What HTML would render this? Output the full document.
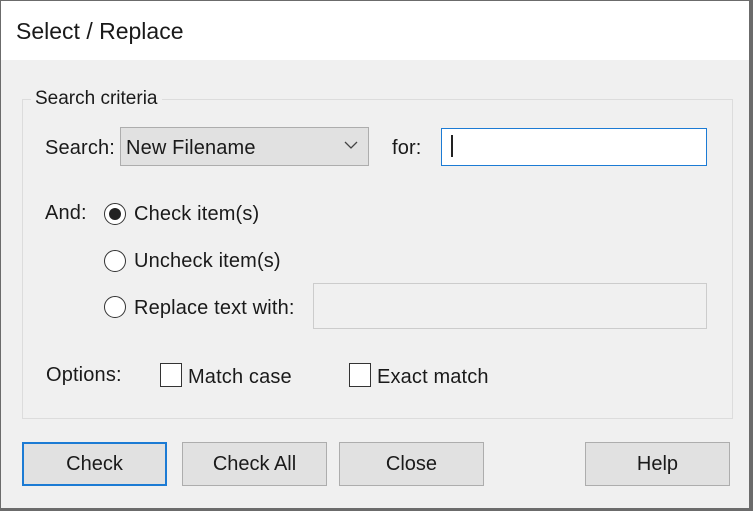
<!DOCTYPE html>
<html><head><style>
body{margin:0;width:753px;height:511px;overflow:hidden;background:#6b6b6b;font-family:"Liberation Sans",sans-serif;color:#1a1a1a;}
#win{position:absolute;left:1px;top:1px;width:748px;height:507px;background:#f0f0f0;}
#title{position:absolute;left:0;top:0;width:748px;height:59px;background:#fff;}
.a{position:absolute;white-space:nowrap;font-size:20px;letter-spacing:0.15px;}
.grp{position:absolute;left:21px;top:98px;width:709px;height:318px;border:1px solid #dcdcdc;}
.btn{position:absolute;top:441px;height:42px;border:1px solid #adadad;background:#e1e1e1;text-align:center;line-height:42px;font-size:20px;}
.radio{position:absolute;width:22px;height:22px;border:1.5px solid #333;border-radius:50%;background:#fff;box-sizing:border-box;}
.cb{position:absolute;width:22px;height:24px;border:1.5px solid #333;background:#fff;box-sizing:border-box;}
</style></head><body>
<div id="win">
<div id="title"><div class="a" style="left:15px;top:17px;font-size:23px;letter-spacing:0;">Select / Replace</div></div>
<div class="grp"></div>
<div class="a" style="left:30px;top:87px;background:#f0f0f0;padding:0 4px;font-size:19px;letter-spacing:0;">Search criteria</div>
<div class="a" style="left:44px;top:136px;">Search:</div>
<div style="position:absolute;left:119px;top:126px;width:247px;height:37px;border:1px solid #adadad;background:#e1e1e1;"></div>
<div class="a" style="left:125px;top:136px;">New Filename</div>
<svg style="position:absolute;left:343px;top:140px" width="14" height="9"><path d="M1 1 L7 7 L13 1" fill="none" stroke="#444" stroke-width="1.3"/></svg>
<div class="a" style="left:391px;top:136px;">for:</div>
<div style="position:absolute;left:440px;top:127px;width:266px;height:38px;border:1px solid #1c7bd4;box-sizing:border-box;background:#fff;"></div>
<div style="position:absolute;left:450px;top:134px;width:1.5px;height:22px;background:#222;"></div>
<div class="a" style="left:44px;top:201px;">And:</div>
<div class="radio" style="left:103px;top:202px;"><div style="position:absolute;left:3.5px;top:3.5px;width:12px;height:12px;border-radius:50%;background:#222;"></div></div>
<div class="a" style="left:133px;top:202px;">Check item(s)</div>
<div class="radio" style="left:103px;top:249px;"></div>
<div class="a" style="left:133px;top:249px;">Uncheck item(s)</div>
<div class="radio" style="left:103px;top:295px;"></div>
<div class="a" style="left:133px;top:296px;">Replace text with:</div>
<div style="position:absolute;left:312px;top:282px;width:394px;height:46px;border:1px solid #ccc;box-sizing:border-box;background:#f0f0f0;"></div>
<div class="a" style="left:45px;top:363px;">Options:</div>
<div class="cb" style="left:159px;top:362px;"></div>
<div class="a" style="left:187px;top:365px;">Match case</div>
<div class="cb" style="left:348px;top:362px;"></div>
<div class="a" style="left:376px;top:365px;">Exact match</div>
<div class="btn" style="left:21px;width:141px;border:2px solid #1c7bd4;height:40px;line-height:40px;">Check</div>
<div class="btn" style="left:181px;width:143px;">Check All</div>
<div class="btn" style="left:338px;width:143px;">Close</div>
<div class="btn" style="left:584px;width:143px;">Help</div>
</div>
</body></html>
